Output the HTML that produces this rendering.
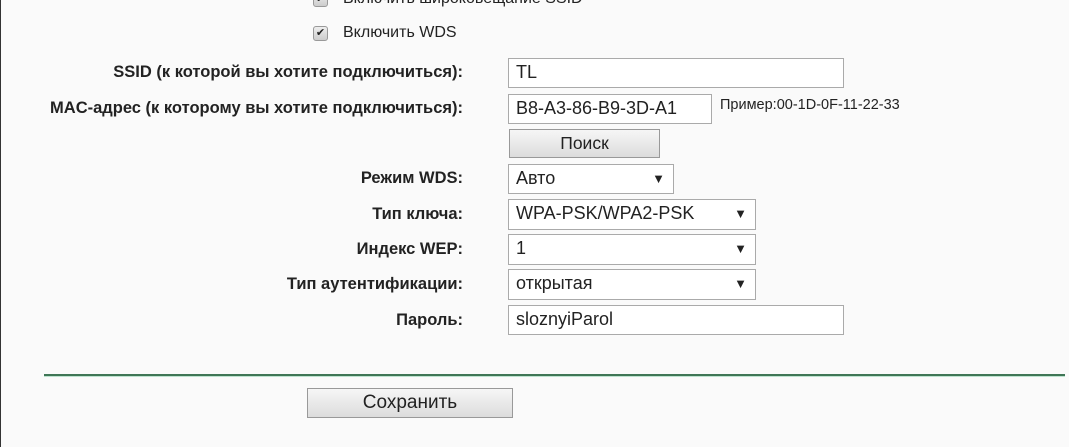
<!DOCTYPE html>
<html><head><meta charset="utf-8"><style>
html,body{margin:0;padding:0;}
body{width:1069px;height:447px;background:#fafafa;position:relative;overflow:hidden;font-family:"Liberation Sans",Arial,sans-serif;color:#222;}
.a{position:absolute;}
.lbl{position:absolute;right:606px;font-weight:bold;font-size:16.5px;white-space:nowrap;}
.box{position:absolute;background:#fff;border:1px solid #aaa;box-sizing:border-box;font-size:18px;padding-left:7px;line-height:27px;white-space:nowrap;}
.arr{position:absolute;right:8px;top:0;font-size:13px;}
.btn{position:absolute;border:1px solid #999;box-sizing:border-box;background:linear-gradient(#f6f6f6,#dcdcdc);text-align:center;font-size:17.5px;}
.cb{position:absolute;width:13px;height:13px;border:1px solid #999;border-radius:3px;background:linear-gradient(#eee,#ccc);font-size:11px;line-height:13px;text-align:center;}
</style></head><body>
<div class="a" style="left:0;top:0;width:1px;height:447px;background:#333;"></div>
<div class="cb" style="left:313px;top:-8px;">✔</div>
<div class="a" style="left:343px;top:-10px;font-size:16px;">Включить широковещание SSID</div>
<div class="cb" style="left:313px;top:26px;">✔</div>
<div class="a" style="left:343px;top:24px;font-size:16px;">Включить WDS</div>

<div class="lbl" style="top:63px;">SSID (к которой вы хотите подключиться):</div>
<div class="box" style="left:508px;top:58px;width:336px;height:30px;">TL</div>
<div class="lbl" style="top:99px;">MAC-адрес (к которому вы хотите подключиться):</div>
<div class="box" style="left:508px;top:94px;width:204px;height:30px;">B8-A3-86-B9-3D-A1</div>
<div class="a" style="left:720px;top:97px;font-size:14.5px;">Пример:00-1D-0F-11-22-33</div>
<div class="btn" style="left:509px;top:129px;width:151px;height:29px;line-height:27px;">Поиск</div>

<div class="lbl" style="top:169px;">Режим WDS:</div>
<div class="box" style="left:508px;top:164px;width:166px;height:30px;">Авто<span class="arr">▼</span></div>
<div class="lbl" style="top:205px;">Тип ключа:</div>
<div class="box" style="left:508px;top:199px;width:248px;height:31px;">WPA-PSK/WPA2-PSK<span class="arr">▼</span></div>
<div class="lbl" style="top:240px;">Индекс WEP:</div>
<div class="box" style="left:508px;top:234px;width:248px;height:31px;">1<span class="arr">▼</span></div>
<div class="lbl" style="top:275px;">Тип аутентификации:</div>
<div class="box" style="left:508px;top:269px;width:248px;height:31px;">открытая<span class="arr">▼</span></div>
<div class="lbl" style="top:311px;">Пароль:</div>
<div class="box" style="left:508px;top:305px;width:336px;height:30px;">sloznyiParol</div>

<div class="a" style="left:44px;top:374px;width:1021px;height:2px;background:#3f7656;"></div>
<div class="a" style="left:44px;top:376px;width:1021px;height:1px;background:#bde3cf;"></div>
<div class="btn" style="left:307px;top:388px;width:206px;height:30px;line-height:28px;font-size:19px;">Сохранить</div>
</body></html>
